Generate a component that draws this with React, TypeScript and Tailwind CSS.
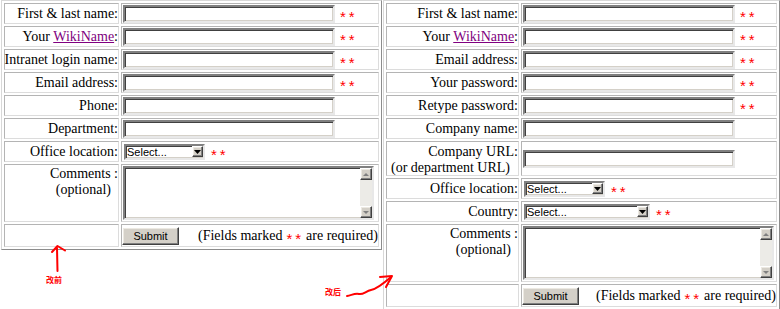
import React from 'react'

const serif = "font-['Liberation_Serif','Times_New_Roman',serif]"
const sans = "font-['Liberation_Sans',Arial,sans-serif]"
const cjk = "font-['Noto_Sans_CJK_SC',sans-serif]"

const tableBox =
  'border border-t-[#d8d8d8] border-l-[#d8d8d8] border-b-[#8c8c8c] border-r-[#8c8c8c] p-[2px] grid gap-[2px] bg-white'
const cell =
  'border border-t-[#b4b4b4] border-l-[#b4b4b4] border-b-[#dcdcdc] border-r-[#dcdcdc]'
const inset =
  'border-2 border-t-[#808080] border-l-[#808080] border-b-[#e8e8e8] border-r-[#e8e8e8] shadow-[inset_1px_1px_0_#404040,inset_-1px_-1px_0_#d4d0c8]'
const outset =
  'border border-t-[#ffffff] border-l-[#ffffff] border-b-[#404040] border-r-[#404040] shadow-[inset_-1px_-1px_0_#808080,inset_1px_1px_0_#ece9e2]'

function Req({ field = true }: { field?: boolean }) {
  return (
    <span
      className={`${sans} text-[15px] leading-[17px] tracking-[3px] text-[#ff0000] ${
        field ? 'ml-[5px] mt-[6px]' : 'ml-[4px] mr-[2px] mt-[5px]'
      }`}
    >
      **
    </span>
  )
}

function Label({ children }: { children: React.ReactNode }) {
  return (
    <div
      className={`${cell} flex items-center justify-end text-right whitespace-nowrap ${serif} text-[14px] leading-[16px] text-black`}
    >
      <span>{children}</span>
    </div>
  )
}

function TextField({ req }: { req?: boolean }) {
  return (
    <div className={`${cell} flex items-center pl-[1px]`}>
      <input type="text" className={`w-[212px] h-[18px] bg-white outline-none ${inset}`} />
      {req && <Req />}
    </div>
  )
}

function FakeSelect({ width }: { width: string }) {
  return (
    <div className={`${width} h-[16px] bg-white flex items-center ${inset}`}>
      <span className={`${sans} flex-1 text-[11px] leading-[12px] text-black pl-[1px]`}>Select...</span>
      <span className={`w-[11px] h-[11px] bg-[#d4d0c8] flex items-center justify-center ${outset}`}>
        <svg width="7" height="4" viewBox="0 0 7 4">
          <path d="M0 0h7L3.5 4z" fill="#000" />
        </svg>
      </span>
    </div>
  )
}

function SelectField({ width }: { width: string }) {
  return (
    <div className={`${cell} flex items-center pl-[2px]`}>
      <FakeSelect width={width} />
      <span className="ml-[1px] flex">
        <Req />
      </span>
    </div>
  )
}

function ScrollBtn({ up }: { up?: boolean }) {
  return (
    <span className={`w-[12px] h-[12px] bg-[#d4d0c8] flex items-center justify-center ${outset}`}>
      <svg width="6" height="3" viewBox="0 0 6 3">
        <path d={up ? 'M0 3h6L3 0z' : 'M0 0h6L3 3z'} fill="#808080" />
      </svg>
    </span>
  )
}

function Comments() {
  return (
    <>
      <div
        className={`${cell} flex flex-col items-end pt-[1px] ${serif} text-[14px] leading-[16px] text-black whitespace-nowrap`}
      >
        <span>Comments :</span>
        <span className="mr-[7px]">(optional)</span>
      </div>
      <div className={`${cell} flex items-center pl-[1px]`}>
        <div className={`w-[251px] h-[54px] bg-white flex justify-end ${inset}`}>
          <div className="w-[12px] flex flex-col bg-[#ecebe7]">
            <ScrollBtn up />
            <div className="flex-1" />
            <ScrollBtn />
          </div>
        </div>
      </div>
    </>
  )
}

function SubmitRow() {
  return (
    <>
      <div className={cell} />
      <div className={`${cell} flex items-center justify-between`}>
        <button
          type="button"
          className={`w-[57px] h-[18px] bg-[#d4d0c8] ${sans} text-[11px] leading-[12px] text-black ${outset}`}
        >
          Submit
        </button>
        <span className={`flex items-center ${serif} text-[14px] leading-[16px] text-black whitespace-nowrap`}>
          (Fields marked
          <span className="flex">
            <Req field={false} />
          </span>
          are required)
        </span>
      </div>
    </>
  )
}

function Wiki() {
  return (
    <>
      Your{' '}
      <a href="#" className="text-[#800080] underline">
        WikiName
      </a>
      :
    </>
  )
}

export default function App() {
  return (
    <div className="relative w-[780px] h-[309px] bg-white overflow-hidden flex items-start">
      {/* before */}
      <div
        className={`${tableBox} ml-[1px] grid-cols-[115px_258px] grid-rows-[21px_21px_21px_21px_21px_21px_21px_58px_23px]`}
      >
        <Label>First &amp; last name:</Label>
        <TextField req />
        <Label>
          <Wiki />
        </Label>
        <TextField req />
        <Label>Intranet login name:</Label>
        <TextField req />
        <Label>Email address:</Label>
        <TextField req />
        <Label>Phone:</Label>
        <TextField />
        <Label>Department:</Label>
        <TextField />
        <Label>Office location:</Label>
        <SelectField width="w-[81px]" />
        <Comments />
        <SubmitRow />
      </div>

      {/* after */}
      <div
        className={`${tableBox} ml-[1px] grid-cols-[133px_256px] grid-rows-[21px_21px_21px_21px_21px_21px_35px_21px_21px_58px_23px]`}
      >
        <Label>First &amp; last name:</Label>
        <TextField req />
        <Label>
          <Wiki />
        </Label>
        <TextField req />
        <Label>Email address:</Label>
        <TextField req />
        <Label>Your password:</Label>
        <TextField req />
        <Label>Retype password:</Label>
        <TextField req />
        <Label>Company name:</Label>
        <TextField />
        <div
          className={`${cell} flex flex-col justify-center items-end pt-[2px] ${serif} text-[14px] leading-[16px] text-black whitespace-nowrap`}
        >
          <span>Company URL:</span>
          <span className="mr-[8px]">(or department URL)</span>
        </div>
        <TextField />
        <Label>Office location:</Label>
        <SelectField width="w-[81px]" />
        <Label>Country:</Label>
        <SelectField width="w-[126px]" />
        <Comments />
        <SubmitRow />
      </div>

      {/* annotations */}
      <svg
        className="absolute inset-0 pointer-events-none"
        width="780"
        height="309"
        viewBox="0 0 780 309"
        fill="none"
        stroke="#ff0000"
        strokeWidth="2"
        strokeLinecap="round"
        strokeLinejoin="round"
      >
        <path d="M57.5 271 L57 248" />
        <path d="M52 252 L57.5 246 L65 250.5" />
        <path d="M347 296 C352 295 355 293 359 294 C363 295 366 291 371 290 C377 289 383 284 391 277" />
        <path d="M380 277 L392 276 L386 287" />
      </svg>
      <span className={`absolute left-[46px] top-[275px] ${cjk} text-[8px] leading-[10px] font-bold text-[#ff0000]`}>
        改前
      </span>
      <span className={`absolute left-[325px] top-[287px] ${cjk} text-[8px] leading-[10px] font-bold text-[#ff0000]`}>
        改后
      </span>
    </div>
  )
}
